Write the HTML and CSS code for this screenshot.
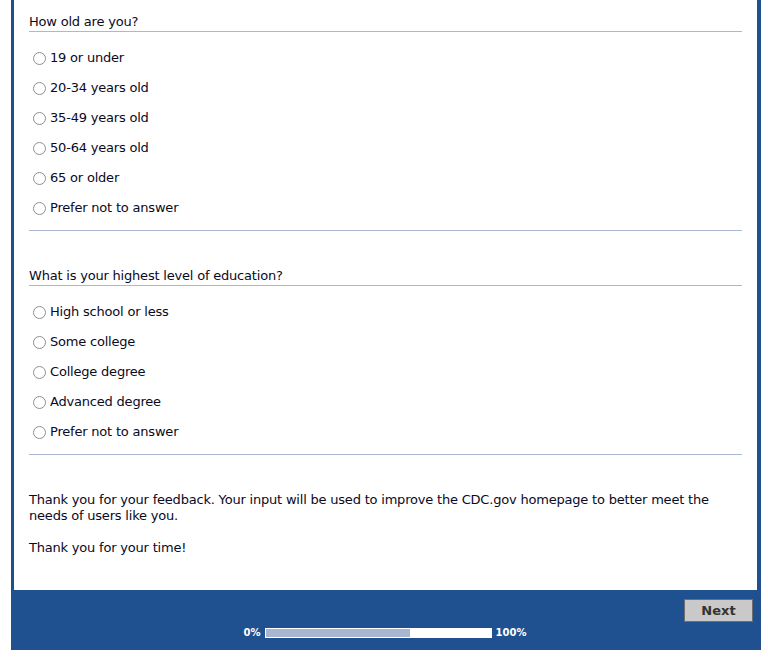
FILE: index.html
```html
<!DOCTYPE html>
<html lang="en">
<head>
    <meta charset="UTF-8">
    <meta name="viewport" content="width=device-width, initial-scale=1.0">
    <title>CDC.gov Feedback Survey</title>
    <link rel="stylesheet" href="styles.css">
</head>
<body>
    <div class="survey">
        <div class="content">
            <div class="section first">
                <div class="question">How old are you?</div>
                <ul class="options">
                    <li><label><input type="radio" name="age"> 19 or under</label></li>
                    <li><label><input type="radio" name="age"> 20-34 years old</label></li>
                    <li><label><input type="radio" name="age"> 35-49 years old</label></li>
                    <li><label><input type="radio" name="age"> 50-64 years old</label></li>
                    <li><label><input type="radio" name="age"> 65 or older</label></li>
                    <li><label><input type="radio" name="age"> Prefer not to answer</label></li>
                </ul>
            </div>
            <div class="section">
                <div class="question">What is your highest level of education?</div>
                <ul class="options">
                    <li><label><input type="radio" name="edu"> High school or less</label></li>
                    <li><label><input type="radio" name="edu"> Some college</label></li>
                    <li><label><input type="radio" name="edu"> College degree</label></li>
                    <li><label><input type="radio" name="edu"> Advanced degree</label></li>
                    <li><label><input type="radio" name="edu"> Prefer not to answer</label></li>
                </ul>
            </div>
            <div class="thanks">
                <p>Thank you for your feedback. Your input will be used to improve the CDC.gov homepage to better meet the needs of users like you.</p>
                <p>Thank you for your time!</p>
            </div>
        </div>
        <div class="footer">
            <div class="nav">
                <button class="next">Next</button>
            </div>
            <div class="progress">
                <span class="pct">0%</span>
                <div class="bar"><div class="fill" style="width: 144px"></div></div>
                <span class="pct">100%</span>
            </div>
        </div>
    </div>
</body>
</html>
```

FILE: styles.css
```css
body { margin: 0; background: #fff; font-family: "DejaVu Sans", Verdana, sans-serif; font-size: 13px; letter-spacing: -0.2px; color: #0a0a1e; }
.survey { margin-left: 11px; width: 743px; border-left: 3px solid #1f5190; border-right: 4px solid #1f5190; }
.content { background: #fff; padding: 14px 15px 34px 15px; }
.section { border-bottom: 1px solid #a9b8d4; padding-bottom: 7px; margin-bottom: 37px; }
.question { line-height: 16px; padding-bottom: 1px; border-bottom: 1px solid #a9b8d4; }
.options { list-style: none; margin: 11px 0 0 0; padding: 0; }
.options li { height: 30px; display: flex; align-items: center; }
.options label { display: flex; align-items: center; line-height: 16px; }
.options input { appearance: none; -webkit-appearance: none; width: 13px; height: 13px; margin: 0 4px 0 4px; border: 1px solid #8f8f8f; border-radius: 50%; background: #fff; box-sizing: border-box; }
.thanks p { margin: 0 0 16px 0; line-height: 16px; }
.thanks p:last-child { margin-bottom: 0; }
.footer { background: #1f5190; height: 60px; margin-left: -3px; margin-right: -4px; padding: 9px 8px 0 0; box-sizing: border-box; letter-spacing: 0; }
.nav { display: flex; justify-content: flex-end; }
.next { width: 69px; height: 23px; background: #c9c9c9; border: 1px solid #6e6e6e; font-family: "DejaVu Sans", Verdana, sans-serif; font-size: 13px; font-weight: bold; color: #333; padding: 0; }
.progress { display: flex; justify-content: center; align-items: center; gap: 4px; margin-top: 5px; padding-left: 6px; }
.pct { color: #fff; font-size: 10px; font-weight: bold; }
.bar { width: 225px; height: 8px; border: 1px solid #fff; background: #fff; }
.fill { height: 100%; background: #a9b6d0; }
```
